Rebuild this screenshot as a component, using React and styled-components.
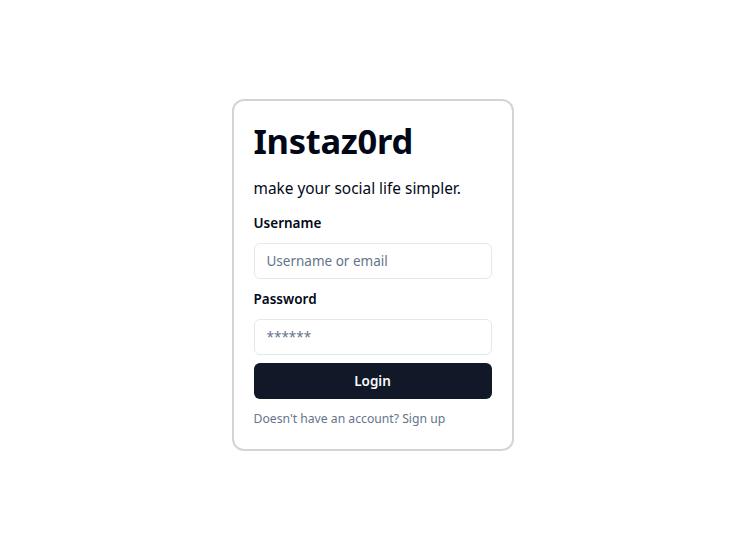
import React from "react";
import styled, { createGlobalStyle } from "styled-components";

const Global = createGlobalStyle`
  * { box-sizing: border-box; }
  body { margin: 0; font-family: "Noto Sans", "Open Sans", sans-serif; background: #fff; color: #020817; }
`;

const Page = styled.div`
  min-height: 547px;
  display: flex;
  align-items: center;
  justify-content: center;
  padding: 2px 0 0 13px;
`;

const Card = styled.form`
  width: 282px;
  border: 2px solid #d4d4d8;
  border-radius: 12px;
  padding: 20px;
  display: flex;
  flex-direction: column;
`;

const Title = styled.h1`
  margin: 0;
  font-size: 34.5px;
  line-height: 40px;
  font-weight: 700;
  letter-spacing: -0.3px;
  color: #020817;
`;

const Tagline = styled.p`
  margin: 16px 0 0;
  font-size: 15.4px;
  line-height: 24px;
  color: #020817;
`;

const Field = styled.div`
  display: flex;
  flex-direction: column;
  gap: 10px;
  margin-top: ${(p) => p.$mt}px;
`;

const Label = styled.label`
  font-size: 13.5px;
  line-height: 20px;
  font-weight: 600;
  color: #020817;
`;

const Input = styled.input`
  height: 36px;
  width: 100%;
  border: 1px solid #e2e8f0;
  border-radius: 6px;
  padding: 0 12px;
  font-family: inherit;
  font-size: 13.5px;
  color: #020817;
  background: #fff;
  outline: none;
  &::placeholder { color: #64748b; }
`;

const Button = styled.button`
  margin-top: 8px;
  height: 36px;
  border: none;
  border-radius: 6px;
  background: #111827;
  color: #f8fafc;
  font-family: inherit;
  font-size: 13.5px;
  font-weight: 600;
`;

const Footer = styled.p`
  margin: 10px 0 0;
  font-size: 12.2px;
  line-height: 20px;
  color: #64748b;
`;

export default function App() {
  return (
    <>
      <Global />
      <Page>
        <Card onSubmit={(e) => e.preventDefault()}>
          <Title>Instaz0rd</Title>
          <Tagline>make your social life simpler.</Tagline>
          <Field $mt={12}>
            <Label>Username</Label>
            <Input placeholder="Username or email" />
          </Field>
          <Field $mt={10}>
            <Label>Password</Label>
            <Input type="password" placeholder="******" />
          </Field>
          <Button type="submit">Login</Button>
          <Footer>Doesn't have an account? Sign up</Footer>
        </Card>
      </Page>
    </>
  );
}
